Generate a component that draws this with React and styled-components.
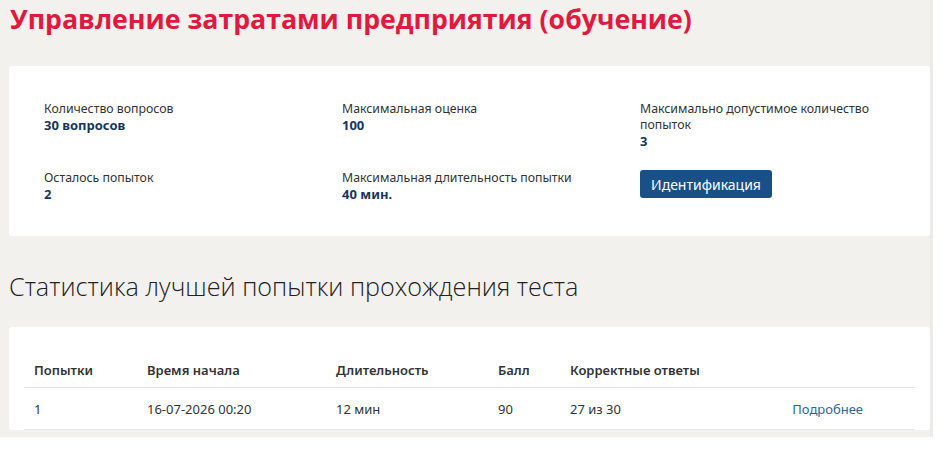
import styled, { createGlobalStyle } from "styled-components";

const GlobalStyle = createGlobalStyle`
  body {
    margin: 0;
    background: #ffffff;
    font-family: "Noto Sans", "Open Sans", sans-serif;
  }
`;

const Page = styled.div`
  width: 921px;
  height: 437px;
  padding-left: 9px;
  border-right: 3px solid #ecebe8;
  background: #f2f1ee;
  overflow: hidden;
`;

const Title = styled.h1`
  margin: 0;
  padding: 2px 0 0 1px;
  height: 66px;
  box-sizing: border-box;
  font-family: "Open Sans", sans-serif;
  font-size: 26.7px;
  font-weight: 700;
  line-height: 34px;
  color: #e0193f;
`;

const Card = styled.div`
  background: #ffffff;
  border-radius: 3px;
  padding: ${(p) => p.$pad};
`;

const InfoGrid = styled.div`
  display: grid;
  grid-template-columns: 298px 298px 240px;
  row-gap: 20px;
  align-items: start;
`;

const Item = styled.div`
  display: flex;
  flex-direction: column;
`;

const Label = styled.span`
  font-size: 12.3px;
  line-height: 16px;
  color: #333333;
`;

const Value = styled.span`
  font-size: 13px;
  font-weight: 700;
  line-height: 17px;
  color: #17365c;
`;

const Button = styled.button`
  width: 132px;
  height: 28px;
  border: none;
  border-radius: 3px;
  background: #1a5088;
  color: #ffffff;
  font-family: "Noto Sans", sans-serif;
  font-size: 14px;
  font-weight: 400;
  cursor: pointer;
`;

const Section = styled.h2`
  margin: 0;
  height: 91px;
  padding-top: 34px;
  box-sizing: border-box;
  font-family: "Open Sans", sans-serif;
  font-size: 25.2px;
  font-weight: 300;
  line-height: 32px;
  color: #222222;
`;

const Table = styled.div`
  display: grid;
  grid-template-columns: 113px 189px 162px 72px 221px 1fr;
`;

const Cell = styled.div`
  padding-left: 10px;
  height: ${(p) => (p.$head ? "34px" : "41px")};
  display: flex;
  align-items: center;
  border-bottom: 1px solid #e6e6e6;
  font-size: 13px;
  font-weight: ${(p) => (p.$head ? 600 : 400)};
  color: ${(p) => (p.$link ? "#2f6497" : "#333333")};
  justify-content: ${(p) => (p.$link ? "flex-end" : "flex-start")};
  padding-right: ${(p) => (p.$link ? "52px" : "0")};
`;

const info = [
  { label: "Количество вопросов", value: "30 вопросов" },
  { label: "Максимальная оценка", value: "100" },
  { label: "Максимально допустимое количество попыток", value: "3" },
  { label: "Осталось попыток", value: "2" },
  { label: "Максимальная длительность попытки", value: "40 мин." },
];

const head = ["Попытки", "Время начала", "Длительность", "Балл", "Корректные ответы", ""];
const row = ["1", "16-07-2026 00:20", "12 мин", "90", "27 из 30"];

export default function App() {
  return (
    <>
      <GlobalStyle />
      <Page>
        <Title>Управление затратами предприятия (обучение)</Title>
        <Card $pad="35px 0 33px 35px">
          <InfoGrid>
            {info.map((it) => (
              <Item key={it.label}>
                <Label>{it.label}</Label>
                <Value>{it.value}</Value>
              </Item>
            ))}
            <Item>
              <Button>Идентификация</Button>
            </Item>
          </InfoGrid>
        </Card>
        <Section>Статистика лучшей попытки прохождения теста</Section>
        <Card $pad="26px 15px 0 15px">
          <Table>
            {head.map((h, i) => (
              <Cell $head key={"h" + i}>{h}</Cell>
            ))}
            {row.map((c, i) => (
              <Cell key={"r" + i}>{c}</Cell>
            ))}
            <Cell $link>Подробнее</Cell>
          </Table>
        </Card>
      </Page>
    </>
  );
}
